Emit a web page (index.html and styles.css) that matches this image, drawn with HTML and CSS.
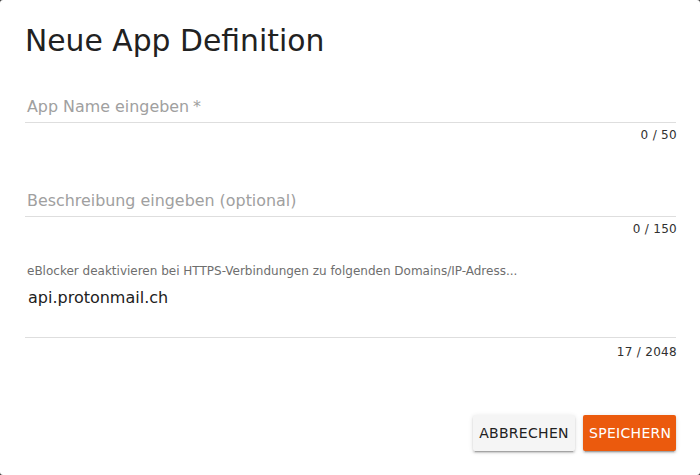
FILE: index.html
```html
<!DOCTYPE html>
<html lang="de">
<head>
<meta charset="utf-8">
<title>Neue App Definition</title>
<link rel="stylesheet" href="styles.css">
</head>
<body>
<div class="dialog">
  <h1 class="title">Neue App Definition</h1>

  <div class="field field-name">
    <div class="input-row"><span class="placeholder">App Name eingeben</span><span class="req">*</span></div>
    <div class="counter">0 / 50</div>
  </div>

  <div class="field field-desc">
    <div class="input-row"><span class="placeholder">Beschreibung eingeben (optional)</span></div>
    <div class="counter">0 / 150</div>
  </div>

  <div class="field field-domains">
    <div class="small-label">eBlocker deaktivieren bei HTTPS-Verbindungen zu folgenden Domains/IP-Adress...</div>
    <div class="textarea-row">api.protonmail.ch</div>
    <div class="counter">17 / 2048</div>
  </div>

  <div class="actions">
    <button class="btn btn-flat" type="button">Abbrechen</button>
    <button class="btn btn-primary" type="button">Speichern</button>
  </div>
</div>
</body>
</html>
```

FILE: styles.css
```css
html, body {
  margin: 0;
  padding: 0;
  background: #3a3a3a;
}

body {
  font-family: "DejaVu Sans", "Liberation Sans", sans-serif;
  color: #212121;
}

.dialog {
  width: 700px;
  height: 475px;
  box-sizing: border-box;
  background: #ffffff;
  border-radius: 3px;
  padding: 25px 24px 0 25px;
  display: flex;
  flex-direction: column;
}

.title {
  margin: 0;
  font-size: 29.8px;
  line-height: 32px;
  font-weight: 400;
  color: #212121;
}

.field {
  display: flex;
  flex-direction: column;
}

.field-name {
  margin-top: 40px;
}

.field-desc {
  margin-top: 48px;
}

.field-domains {
  margin-top: 26px;
}

.input-row {
  font-size: 15.9px;
  line-height: 20px;
  padding: 0 0 5px 2px;
  border-bottom: 1px solid #dedede;
  color: #a0a0a0;
  display: flex;
  gap: 4px;
}

.req {
  color: #a0a0a0;
}

.counter {
  margin-top: 4px;
  margin-right: -1px;
  font-size: 12px;
  line-height: 16px;
  letter-spacing: 0.3px;
  text-align: right;
  color: #303030;
}

.small-label {
  font-size: 12px;
  line-height: 16px;
  color: #6e6e6e;
  padding-left: 2px;
  white-space: nowrap;
}

.textarea-row {
  margin-top: 9px;
  font-size: 16px;
  line-height: 20px;
  padding: 0 0 29px 3px;
  border-bottom: 1px solid #dedede;
  color: #212121;
}

.field-domains .counter {
  margin-top: 6px;
}

.actions {
  margin-top: 55px;
  display: flex;
  justify-content: flex-end;
  gap: 8px;
}

.btn {
  height: 36px;
  padding: 0 6px;
  border: none;
  border-radius: 2px;
  font-family: "DejaVu Sans", "Liberation Sans", sans-serif;
  font-size: 14px;
  letter-spacing: 0.3px;
  text-transform: uppercase;
  cursor: pointer;
  box-shadow: 0 3px 1px -2px rgba(0,0,0,.2), 0 2px 2px 0 rgba(0,0,0,.14), 0 1px 5px 0 rgba(0,0,0,.12);
}

.btn-flat {
  width: 102px;
  background: #f5f5f5;
  color: #212121;
}

.btn-primary {
  width: 93px;
  background: #eb5a0d;
  color: #ffffff;
}
```
